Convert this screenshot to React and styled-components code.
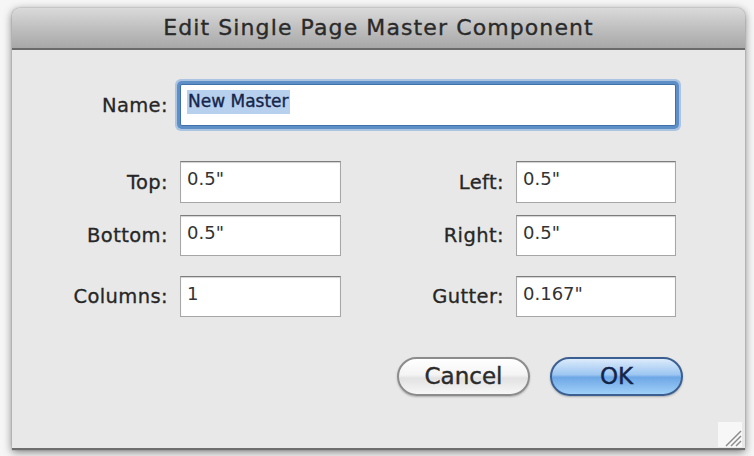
import React from "react";
import styled, { createGlobalStyle } from "styled-components";

const GlobalStyle = createGlobalStyle`
  html, body {
    margin: 0;
    padding: 0;
    background: #f6f6f6;
  }
  body {
    width: 754px;
    height: 456px;
    overflow: hidden;
    font-family: "DejaVu Sans", "Liberation Sans", sans-serif;
  }
`;

const Page = styled.div`
  padding: 8px 9px 0 12px;
`;

const Window = styled.div`
  width: 733px;
  height: 442px;
  display: flex;
  flex-direction: column;
  background: #e8e8e8;
  border-radius: 8px 8px 0 0;
  border-bottom: 2px solid #6e6e6e;
  box-sizing: border-box;
  box-shadow: 0 2px 8px rgba(0, 0, 0, 0.5), 0 0 1px rgba(0, 0, 0, 0.6);
`;

const TitleBar = styled.div`
  height: 42px;
  flex-shrink: 0;
  box-sizing: border-box;
  display: flex;
  align-items: center;
  justify-content: center;
  padding-bottom: 1px;
  border-radius: 8px 8px 0 0;
  background: linear-gradient(#dadada, #bdbdbd 55%, #a8a8a8);
  border-bottom: 2px solid #6a6a6a;
  color: #2a2a2a;
  font-size: 22px;
  letter-spacing: 1.1px;
  -webkit-text-stroke: 0.35px #2a2a2a;
`;

const Body = styled.div`
  flex: 1;
  display: flex;
  flex-direction: column;
  padding: 34px 0 0 0;
`;

const Row = styled.div`
  display: grid;
  grid-template-columns: 96px 161px 151px 160px;
  column-gap: 12px;
  align-items: center;
  padding-left: 60px;
  margin-top: ${(p) => p.$gap || 0}px;
`;

const Label = styled.label`
  text-align: right;
  font-size: 19.5px;
  letter-spacing: 0.4px;
  color: #262626;
  -webkit-text-stroke: 0.3px #262626;
  white-space: nowrap;
`;

const Field = styled.div`
  height: ${(p) => p.$h || 42}px;
  box-sizing: border-box;
  background: #fff;
  border: 1px solid #a6a6a6;
  border-top-color: #7c7c7c;
  box-shadow: inset 0 1px 1px rgba(0, 0, 0, 0.18);
  padding: 6px 6px 0;
  font-size: 18px;
  color: #333;
  grid-column: ${(p) => p.$span || "auto"};
`;

const NameField = styled(Field)`
  border: 1px solid #3f72ab;
  border-radius: 2px;
  box-shadow: 0 0 0 3px #5d8fc6, 0 0 0 5px rgba(120, 165, 220, 0.55);
  padding-top: 6px;
  padding-left: 6px;
  font-size: 17px;
`;

const Selected = styled.span`
  background: #b7d0ee;
  color: #15264a;
  -webkit-text-stroke: 0.35px #15264a;
  padding: 1px 1px 3px;
`;

const Buttons = styled.div`
  display: flex;
  justify-content: flex-end;
  gap: 20px;
  padding-right: 62px;
  margin-top: 40px;
`;

const Button = styled.button`
  width: 133px;
  height: 39px;
  border-radius: 20px;
  font-family: "DejaVu Sans", "Liberation Sans", sans-serif;
  font-size: 23px;
  padding: 0 0 2px;
  cursor: pointer;
  border: 2px solid ${(p) => (p.$primary ? "#3b5f90" : "#8c8c8c")};
  color: ${(p) => (p.$primary ? "#14254a" : "#2b2b2b")};
  -webkit-text-stroke: 0.4px ${(p) => (p.$primary ? "#14254a" : "#2b2b2b")};
  background: ${(p) =>
    p.$primary
      ? "linear-gradient(#dcebfb 0%, #9cc6f1 45%, #6ea7e6 52%, #9fd0f8 100%)"
      : "linear-gradient(#ffffff 0%, #f4f4f4 45%, #e2e2e2 55%, #f7f7f7 100%)"};
  box-shadow: 0 1px 2px rgba(0, 0, 0, 0.25);
`;

const Footer = styled.div`
  margin-top: auto;
  display: flex;
  justify-content: flex-end;
  padding: 0 3px 1px 0;
`;

const Grip = styled.div`
  width: 24px;
  height: 25px;
  background: #f7f7f7;
  display: flex;
`;

const Resize = () => (
  <Grip>
    <svg width="24" height="25" viewBox="0 0 24 25">
      <g stroke="#8a8a8a" strokeWidth="1.4">
        <line x1="8" y1="24" x2="23" y2="9" />
        <line x1="13" y1="24" x2="23" y2="14" />
        <line x1="18" y1="24" x2="23" y2="19" />
      </g>
    </svg>
  </Grip>
);

export default function App() {
  return (
    <>
      <GlobalStyle />
      <Page>
        <Window>
          <TitleBar>Edit Single Page Master Component</TitleBar>
          <Body>
            <Row>
              <Label>Name:</Label>
              <NameField $span="2 / 5">
                <Selected>New Master</Selected>
              </NameField>
            </Row>
            <Row $gap={35}>
              <Label>Top:</Label>
              <Field>0.5"</Field>
              <Label>Left:</Label>
              <Field>0.5"</Field>
            </Row>
            <Row $gap={12}>
              <Label>Bottom:</Label>
              <Field $h={41}>0.5"</Field>
              <Label>Right:</Label>
              <Field $h={41}>0.5"</Field>
            </Row>
            <Row $gap={20}>
              <Label>Columns:</Label>
              <Field $h={41}>1</Field>
              <Label>Gutter:</Label>
              <Field $h={41}>0.167"</Field>
            </Row>
            <Buttons>
              <Button>Cancel</Button>
              <Button $primary>OK</Button>
            </Buttons>
            <Footer>
              <Resize />
            </Footer>
          </Body>
        </Window>
      </Page>
    </>
  );
}
